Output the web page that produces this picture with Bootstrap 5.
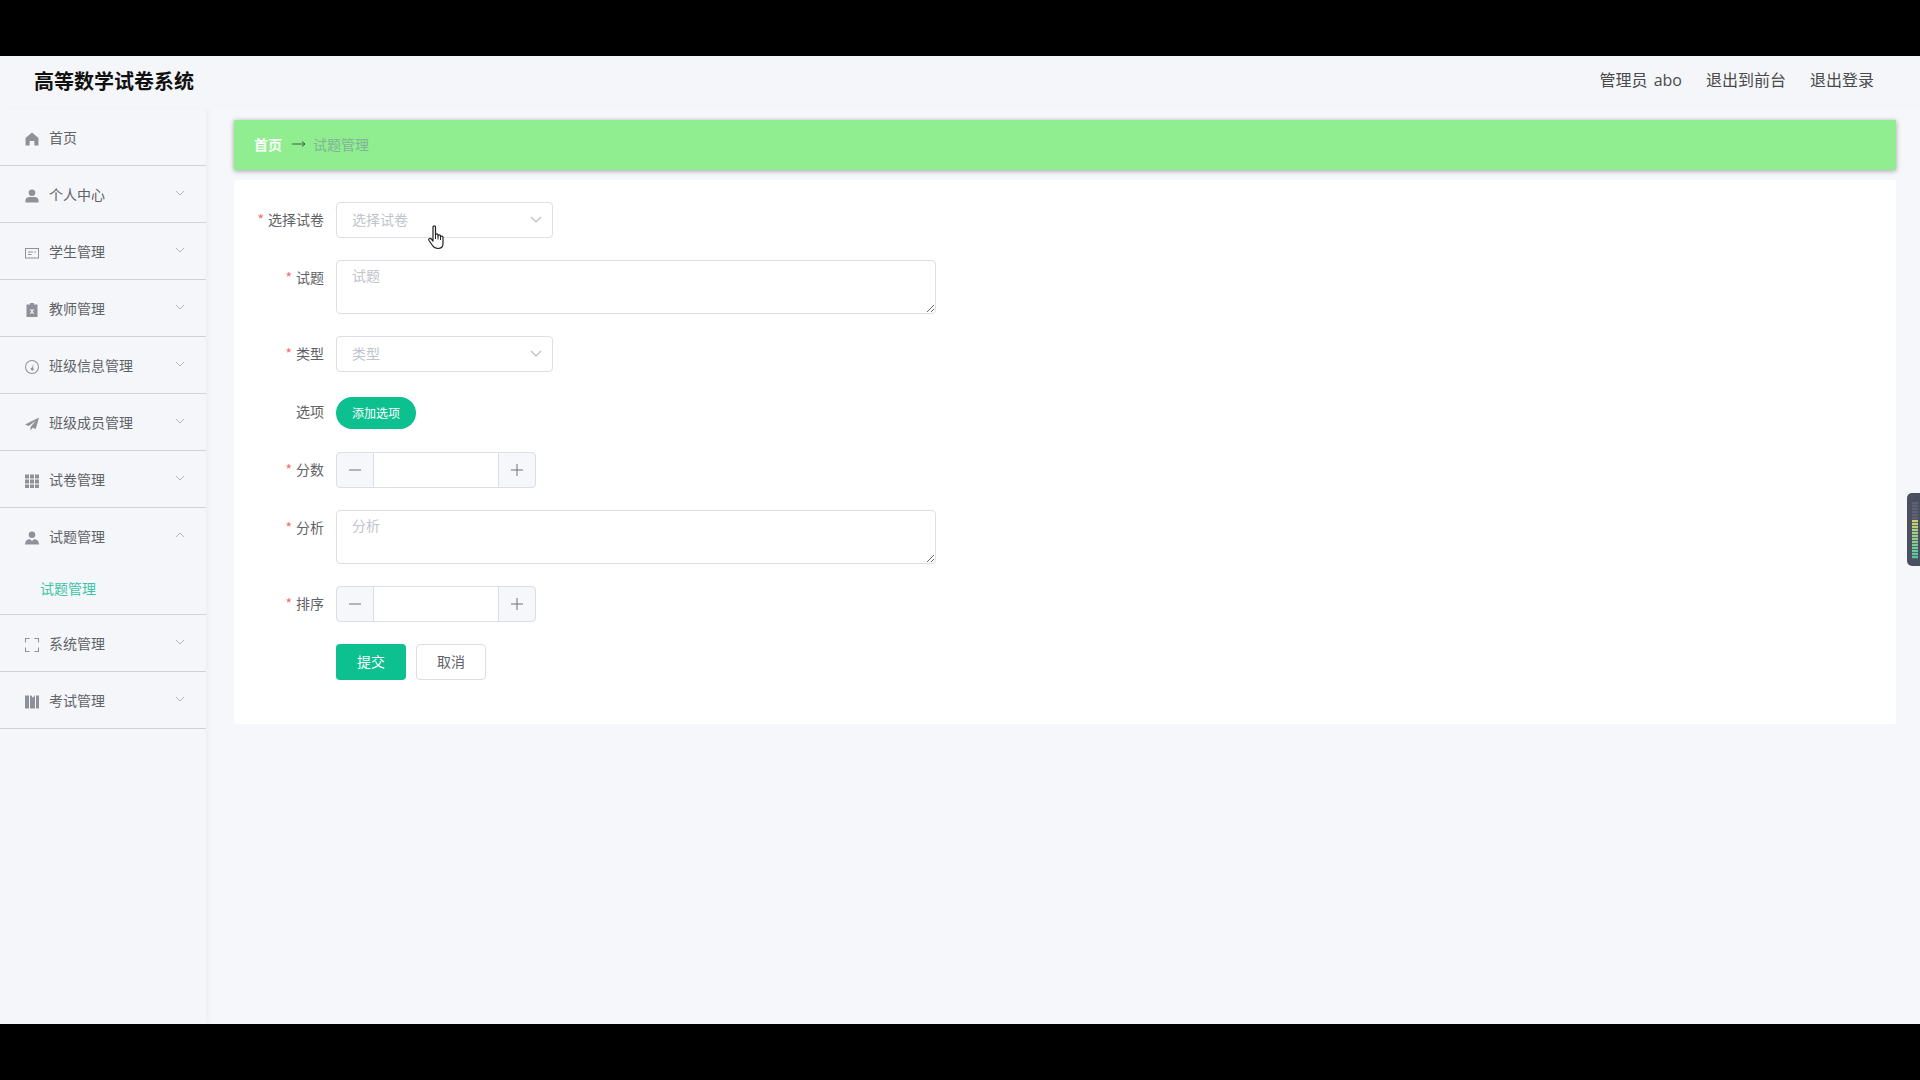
<!DOCTYPE html>
<html lang="zh-CN">
  <head>
    <meta charset="UTF-8" />
    <meta name="viewport" content="width=device-width, initial-scale=1.0" />
    <title>高等数学试卷系统</title>
    <link
      href="https://cdn.jsdelivr.net/npm/bootstrap@5.3.0/dist/css/bootstrap.min.css"
      rel="stylesheet"
    />
    <style>
      body {
        font-family: 'Noto Sans CJK SC', 'Liberation Sans', sans-serif;
        background-color: #000;
        height: 1080px;
        overflow: hidden;
        font-size: 14px;
        color: #606266;
        padding: 56px 0;
      }

      .app-shell {
        height: 968px;
        background-color: #f6f7fa;
        position: relative;
        overflow: hidden;
      }

      .top-bar {
        height: 53px;
        padding: 0 46px 0 34px;
        background-color: #f4f6fa;
      }

      .brand-title {
        font-size: 20px;
        font-weight: 700;
        color: #111;
        padding-bottom: 4px;
      }

      .top-links {
        gap: 24px;
        font-family: 'Open Sans', 'Noto Sans CJK SC', sans-serif;
        font-size: 16px;
        color: #4a4a4a;
        padding-bottom: 5px;
        word-spacing: 2px;
      }

      .side-menu {
        width: 206px;
        height: 915px;
        flex-shrink: 0;
        background-color: #f4f6fa;
        box-shadow: 3px 0 4px rgba(0, 0, 0, 0.03);
      }

      .menu-row {
        height: 57px;
        padding-left: 25px;
        padding-right: 21px;
        border-bottom: 1px solid #d0d2d8;
        color: #5f6266;
      }

      .menu-open {
        height: 107px;
        border-bottom: 1px solid #d0d2d8;
      }

      .menu-open .menu-row {
        border-bottom: 0;
      }

      .menu-child {
        color: #3cc4a8;
        padding-left: 40px;
        margin-top: 11px;
        line-height: 24px;
      }

      .menu-ico {
        width: 14px;
        height: 14px;
        margin-top: 3px;
        margin-right: 10px;
        fill: #8f9199;
        flex-shrink: 0;
      }

      .menu-arrow {
        width: 10px;
        height: 6px;
        margin-left: auto;
        margin-top: -3px;
        fill: none;
        stroke: #b4b6bc;
        stroke-width: 1;
      }

      .main-area {
        padding: 11px 24px 0 28px;
      }

      .crumb-bar {
        height: 50px;
        padding: 0 0 2px 20px;
        background-color: #90ee90;
        box-shadow: 0 1px 5px rgba(0, 0, 0, 0.35);
      }

      .crumb-home {
        color: #fff;
        font-weight: 700;
      }

      .crumb-arrow {
        width: 14px;
        height: 8px;
        margin: 0 7px 0 10px;
        stroke: #3c5c42;
        fill: none;
      }

      .crumb-current {
        color: #7fb496;
      }

      .form-panel {
        margin-top: 10px;
        padding: 22px 0 44px;
        background-color: #fff;
      }

      .field-row {
        display: flex;
        margin-bottom: 22px;
      }

      .field-row:last-child {
        margin-bottom: 0;
      }

      .field-label {
        width: 102px;
        flex-shrink: 0;
        padding-right: 12px;
        margin: 0;
        text-align: right;
        line-height: 34px;
        color: #606266;
      }

      .field-label i {
        color: #f56c6c;
        font-style: normal;
        margin-right: 4px;
      }

      .paper-select.form-select {
        width: 217px;
        height: 36px;
        padding: 0 30px 2px 15px;
        font-size: 14px;
        color: #c0c4cc;
        border-color: #dcdfe6;
        border-radius: 4px;
        background-size: 14px 10px;
        background-position: right 9px center;
        background-image: url("data:image/svg+xml,%3csvg xmlns='http://www.w3.org/2000/svg' viewBox='0 0 14 10'%3e%3cpath fill='none' stroke='%23b8bbc2' stroke-width='1.1' d='M2 2l5 5 5-5'/%3e%3c/svg%3e");
      }

      .paper-text.form-control {
        width: 600px;
        height: 54px;
        min-height: 54px;
        padding: 4px 15px;
        font-size: 14px;
        color: #606266;
        border-color: #dcdfe6;
        border-radius: 4px;
      }

      .paper-text::placeholder {
        color: #c0c4cc;
      }

      .add-option {
        height: 32px;
        width: 80px;
        margin: 3px 0 1px;
        padding: 0 0 1px;
        font-size: 12px;
        border: 0;
        border-radius: 16px;
      }

      .add-option,
      .add-option:hover,
      .submit-btn,
      .submit-btn:hover {
        background-color: #0cc08f;
        color: #fff;
      }

      .step-group {
        width: 200px;
        height: 36px;
        flex-wrap: nowrap;
      }

      .step-group .btn {
        width: 38px;
        height: 36px;
        padding: 0;
        display: flex;
        align-items: center;
        justify-content: center;
        background-color: #f5f7fa;
        border-color: #dcdfe6;
        border-radius: 4px;
      }

      .step-group .step-minus {
        border-top-right-radius: 0;
        border-bottom-right-radius: 0;
      }

      .step-group .step-plus {
        border-top-left-radius: 0;
        border-bottom-left-radius: 0;
      }

      .step-group svg {
        width: 12px;
        height: 12px;
        stroke: #6f7277;
        fill: none;
      }

      .step-group .form-control {
        height: 36px;
        border-color: #dcdfe6;
      }

      .action-pair {
        gap: 10px;
      }

      .submit-btn,
      .cancel-btn {
        width: 70px;
        height: 36px;
        padding: 0 0 2px;
        font-size: 14px;
        border-radius: 4px;
      }

      .submit-btn {
        border: 0;
      }

      .cancel-btn {
        background-color: #fff;
        border: 1px solid #dcdfe6;
        color: #606266;
      }

      .hand-cursor {
        position: absolute;
        left: 428px;
        top: 169px;
        width: 18px;
        height: 25px;
      }

      .mic-widget {
        position: absolute;
        right: 0;
        top: 437px;
        width: 13px;
        height: 73px;
        background-color: #4b5060;
        border-radius: 5px 0 0 5px;
      }

      .mic-widget span {
        position: absolute;
        left: 5px;
        width: 6px;
        top: 9px;
        bottom: 7px;
        background: linear-gradient(#5d6272 0 32%, #cfd06a 32%, #8fcf8c 65%, #4fc4a6 100%);
      }

      .mic-widget span::after {
        content: '';
        position: absolute;
        inset: 0;
        background: repeating-linear-gradient(transparent 0 2px, rgba(75, 80, 96, 0.75) 2px 3px);
      }
    </style>
  </head>
  <body>
    <div class="app-shell">
      <header class="top-bar d-flex align-items-center justify-content-between">
        <div class="brand-title">高等数学试卷系统</div>
        <div class="top-links d-flex">
          <span>管理员 abo</span>
          <span>退出到前台</span>
          <span>退出登录</span>
        </div>
      </header>

      <div class="d-flex">
        <aside class="side-menu">
          <div class="menu-row d-flex align-items-center">
            <svg class="menu-ico" viewBox="0 0 14 14"><path d="M7 0.500L0.500 6v7.500h4.200V9h4.600v4.500h4.200V6z" /></svg>
            首页
          </div>
          <div class="menu-row d-flex align-items-center">
            <svg class="menu-ico" viewBox="0 0 14 14"><circle cx="7" cy="3.800" r="3.300" /><path d="M0.500 13.500v-2.600C0.500 9 2.500 8 4.500 8h5c2 0 4 1 4 2.900v2.600z" /></svg>
            个人中心
            <svg class="menu-arrow" viewBox="0 0 10 6"><path d="M1 1l4 4 4-4" /></svg>
          </div>
          <div class="menu-row d-flex align-items-center">
            <svg class="menu-ico" viewBox="0 0 14 14"><path fill-rule="evenodd" d="M0 2h14v10.500H0zM1 3v8.500h12V3zM3 5.500h5v1H3zM3 8h3.500v1H3zM9.500 5.500H11v1H9.500z" /></svg>
            学生管理
            <svg class="menu-arrow" viewBox="0 0 10 6"><path d="M1 1l4 4 4-4" /></svg>
          </div>
          <div class="menu-row d-flex align-items-center">
            <svg class="menu-ico" viewBox="0 0 14 14"><path fill-rule="evenodd" d="M5 0h4v1.500h3.500V14h-11V1.500H5zM4.800 6.200L6.300 8.500 4.800 10.800h1.300l.9-1.400.9 1.400h1.300L7.700 8.500 9.200 6.200H7.900L7 7.600 6.100 6.200z" /></svg>
            教师管理
            <svg class="menu-arrow" viewBox="0 0 10 6"><path d="M1 1l4 4 4-4" /></svg>
          </div>
          <div class="menu-row d-flex align-items-center">
            <svg class="menu-ico" viewBox="0 0 14 14"><path fill-rule="evenodd" d="M7 0a7 7 0 1 0 0 14A7 7 0 0 0 7 0zm0 1a6 6 0 1 1 0 12A6 6 0 0 1 7 1zm1.500 2.500L7.200 7.600a1.500 1.500 0 1 0 1 .3z" /></svg>
            班级信息管理
            <svg class="menu-arrow" viewBox="0 0 10 6"><path d="M1 1l4 4 4-4" /></svg>
          </div>
          <div class="menu-row d-flex align-items-center">
            <svg class="menu-ico" viewBox="0 0 14 14"><path d="M14 0.500L0 7.500l3.800 1.600L11 3.500 5.500 10v3.500l2.200-2.700 3 1.300z" /></svg>
            班级成员管理
            <svg class="menu-arrow" viewBox="0 0 10 6"><path d="M1 1l4 4 4-4" /></svg>
          </div>
          <div class="menu-row d-flex align-items-center">
            <svg class="menu-ico" viewBox="0 0 14 14"><path d="M0 0.500h4v4H0zM5 0.500h4v4H5zM10 0.500h4v4h-4zM0 5.500h4v4H0zM5 5.500h4v4H5zM10 5.500h4v4h-4zM0 10.500h4v3.500H0zM5 10.500h4v3.500H5zM10 10.500h4v3.500h-4z" /></svg>
            试卷管理
            <svg class="menu-arrow" viewBox="0 0 10 6"><path d="M1 1l4 4 4-4" /></svg>
          </div>
          <div class="menu-open">
            <div class="menu-row d-flex align-items-center">
              <svg class="menu-ico" viewBox="0 0 14 14"><circle cx="7" cy="3.800" r="3.300" /><path d="M0 13.500c0-3 1.500-5 4.500-5.500L7 10l2.500-2c3 .5 4.500 2.500 4.500 5.500z" /></svg>
              试题管理
              <svg class="menu-arrow" viewBox="0 0 10 6"><path d="M1 5l4-4 4 4" /></svg>
            </div>
            <div class="menu-child">试题管理</div>
          </div>
          <div class="menu-row d-flex align-items-center">
            <svg class="menu-ico" viewBox="0 0 14 14"><path d="M0 0h4.500v1H1v3.500H0zM9.500 0H14v4.500h-1V1H9.500zM0 9.500h1V13h3.500v1H0zM13 9.500h1V14H9.500v-1H13z" /></svg>
            系统管理
            <svg class="menu-arrow" viewBox="0 0 10 6"><path d="M1 1l4 4 4-4" /></svg>
          </div>
          <div class="menu-row d-flex align-items-center">
            <svg class="menu-ico" viewBox="0 0 14 14"><path d="M0 0.500h4v13H0zM5 0.500h1.500L8 3l1.500-2.500H10v13H5zM11 0.500h3v13h-3z" /></svg>
            考试管理
            <svg class="menu-arrow" viewBox="0 0 10 6"><path d="M1 1l4 4 4-4" /></svg>
          </div>
        </aside>

        <main class="main-area flex-grow-1">
          <div class="crumb-bar d-flex align-items-center">
            <span class="crumb-home">首页</span>
            <svg class="crumb-arrow" viewBox="0 0 14 8"><path d="M0 4h13M10 1.500L13 4l-3 2.500" /></svg>
            <span class="crumb-current">试题管理</span>
          </div>

          <form class="form-panel">
            <div class="field-row">
              <label class="field-label"><i>*</i>选择试卷</label>
              <select class="form-select paper-select"><option>选择试卷</option></select>
            </div>
            <div class="field-row">
              <label class="field-label"><i>*</i>试题</label>
              <textarea class="form-control paper-text" placeholder="试题"></textarea>
            </div>
            <div class="field-row">
              <label class="field-label"><i>*</i>类型</label>
              <select class="form-select paper-select"><option>类型</option></select>
            </div>
            <div class="field-row">
              <label class="field-label">选项</label>
              <button type="button" class="btn add-option">添加选项</button>
            </div>
            <div class="field-row">
              <label class="field-label"><i>*</i>分数</label>
              <div class="input-group step-group">
                <button type="button" class="btn step-minus"><svg viewBox="0 0 12 12"><path d="M0 6h12" /></svg></button>
                <input type="text" class="form-control" />
                <button type="button" class="btn step-plus"><svg viewBox="0 0 12 12"><path d="M0 6h12M6 0v12" /></svg></button>
              </div>
            </div>
            <div class="field-row">
              <label class="field-label"><i>*</i>分析</label>
              <textarea class="form-control paper-text" placeholder="分析"></textarea>
            </div>
            <div class="field-row">
              <label class="field-label"><i>*</i>排序</label>
              <div class="input-group step-group">
                <button type="button" class="btn step-minus"><svg viewBox="0 0 12 12"><path d="M0 6h12" /></svg></button>
                <input type="text" class="form-control" />
                <button type="button" class="btn step-plus"><svg viewBox="0 0 12 12"><path d="M0 6h12M6 0v12" /></svg></button>
              </div>
            </div>
            <div class="field-row">
              <div class="field-label"></div>
              <div class="d-flex action-pair">
                <button type="button" class="btn submit-btn">提交</button>
                <button type="button" class="btn cancel-btn">取消</button>
              </div>
            </div>
          </form>
        </main>
      </div>

      <svg class="hand-cursor" viewBox="0 0 18 25">
        <path fill="#fff" stroke="#222" stroke-width="1.200" stroke-linejoin="round" d="M5 2c0-1.500 2.500-1.500 2.500 0v8c0-1.500 2.500-1.500 2.500 0v1c0-1.500 2.500-1.500 2.500 0v1c0-1.300 2.500-1.300 2.500 .3v6.200c0 3-2 5-5 5-3 0-4.500-1.500-5.500-3L1 15.500c-1-1.500 1-3 2.300-1.500L5 16z" />
        <path fill="none" stroke="#222" d="M7.500 10v4M10 11v3.500M12.500 12v3" />
      </svg>
      <div class="mic-widget"><span></span></div>
    </div>

    <script src="https://cdn.jsdelivr.net/npm/bootstrap@5.3.0/dist/js/bootstrap.bundle.min.js"></script>
  </body>
</html>
